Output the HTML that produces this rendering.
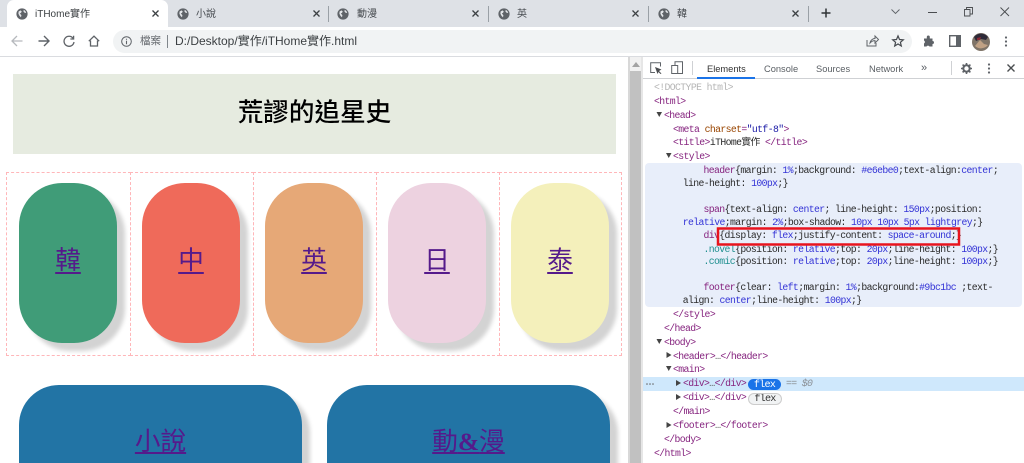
<!DOCTYPE html>
<html lang="zh-Hant"><head><meta charset="utf-8"><title>iTHome實作</title>
<style>
html,body{margin:0;padding:0;width:1024px;height:463px;overflow:hidden;background:#fff}
body{position:relative;font-family:"Liberation Sans","Noto Sans CJK TC",sans-serif}
#w{position:absolute;left:0;top:0;width:1024px;height:463px;overflow:hidden;filter:blur(.35px)}
.a{position:absolute;white-space:pre}
.tt{font-size:10px;color:#45494e;top:8px;line-height:14px}
.card{position:absolute;top:183px;width:98px;height:160px;border-radius:43px;box-shadow:8px 8px 4px lightgrey;text-align:center;line-height:156px;font-size:25.6px;color:#551a8b;text-decoration:underline;text-decoration-thickness:2px;text-underline-offset:2.5px}
.big{position:absolute;top:385px;width:283px;height:78px;border-radius:40px 40px 0 0;background:#2274a5;box-shadow:8px 8px 4px lightgrey;text-align:center;line-height:113px;font-size:25.6px;color:#551a8b;text-decoration:underline;text-decoration-thickness:2px;text-underline-offset:2px;font-family:"Liberation Serif","Noto Sans CJK TC",serif;overflow:hidden}
.cell{position:absolute;top:172px;height:184px;border:1px dashed #ffb6b9;box-sizing:border-box}
.m{position:absolute;white-space:pre;font-family:"Liberation Mono","Noto Sans CJK TC",monospace;font-size:9.8px;letter-spacing:-.62px;line-height:14px;color:#2a2a2a}
.t{color:#86247f}.n{color:#994500}.v{color:#1a1aa6}.b{color:#3333d6}.s{color:#86247f}.c{color:#1f8f8f}
.dt{position:absolute;font-size:9.3px;color:#5a5f64;top:63px;line-height:13px;white-space:pre}
svg{position:absolute;overflow:visible}
</style></head><body><div id="w">
<div class="a" style="left:0;top:0;width:1024px;height:27px;background:#dee1e6"></div>
<div class="a" style="left:7px;top:0;width:161px;height:27px;background:#fff;border-radius:7px 7px 0 0"></div>
<div class="a" style="left:0;top:27px;width:1024px;height:29px;background:#fff"></div>
<div class="a" style="left:0;top:56px;width:1024px;height:1px;background:#dadce0"></div>

<svg width="0" height="0" style="left:0;top:0"><defs>
<g id="globe"><circle cx="6" cy="6" r="5.6" fill="#5f6368"/><path d="M2.600 3.500 4.600 2.400 5.800 3.600 4.800 5 3.800 5.400 5.400 7.200 5 9.400 3.600 8 2.400 5.800ZM7.800 1.800 9.600 3.400 10.200 5 8.600 4.800 7.400 3.400Z" fill="#e4e6e9"/></g>
<path id="x" d="M.5.5 6.500 6.500M6.500.5 .5 6.500" stroke="#3c4043" stroke-width="1.300" fill="none"/>
</defs></svg>

<svg style="left:16px;top:8px" width="12" height="12"><use href="#globe"/></svg>
<div class="a tt" style="left:35px;color:#3c4043">iTHome實作</div>
<svg style="left:152px;top:10px" width="7" height="7"><use href="#x"/></svg>
<svg style="left:177px;top:8px" width="12" height="12"><use href="#globe"/></svg>
<div class="a tt" style="left:196px">小說</div>
<svg style="left:313px;top:10px" width="7" height="7"><use href="#x"/></svg>
<div class="a" style="left:328px;top:6px;width:1px;height:16px;background:#9aa0a6"></div>
<svg style="left:337px;top:8px" width="12" height="12"><use href="#globe"/></svg>
<div class="a tt" style="left:357px">動漫</div>
<svg style="left:472px;top:10px" width="7" height="7"><use href="#x"/></svg>
<div class="a" style="left:488px;top:6px;width:1px;height:16px;background:#9aa0a6"></div>
<svg style="left:498px;top:8px" width="12" height="12"><use href="#globe"/></svg>
<div class="a tt" style="left:517px">英</div>
<svg style="left:632px;top:10px" width="7" height="7"><use href="#x"/></svg>
<div class="a" style="left:648px;top:6px;width:1px;height:16px;background:#9aa0a6"></div>
<svg style="left:658px;top:8px" width="12" height="12"><use href="#globe"/></svg>
<div class="a tt" style="left:677px">韓</div>
<svg style="left:792px;top:10px" width="7" height="7"><use href="#x"/></svg>
<div class="a" style="left:808px;top:6px;width:1px;height:16px;background:#9aa0a6"></div>
<svg style="left:821px;top:8px" width="10" height="10"><path d="M5 .5V9.500M.5 5H9.500" stroke="#2f3235" stroke-width="1.500"/></svg>

<svg style="left:891px;top:9px" width="10" height="6"><path d="M.5.5 4.500 4.500 8.500.5" stroke="#5f6368" fill="none" stroke-width=".9"/></svg>
<div class="a" style="left:928px;top:12px;width:9px;height:1px;background:#4a4d50"></div>
<svg style="left:964px;top:7px" width="9" height="10"><path d="M.5 2.500H6V9H.5ZM2.500 2.500V.5H8.500V7H6" fill="none" stroke="#4a4d50" stroke-width=".9"/></svg>
<svg style="left:1000px;top:7px" width="10" height="10"><path d="M.5.5 9 9M9 .5 .5 9" stroke="#4a4d50" stroke-width=".9"/></svg>

<svg style="left:11px;top:35px" width="12" height="12"><path d="M11.500 6H1M6 1 1 6 6 11" fill="none" stroke="#b6b9bd" stroke-width="1.300"/></svg>
<svg style="left:38px;top:35px" width="12" height="12"><path d="M.5 6H11M6 1 11 6 6 11" fill="none" stroke="#5f6368" stroke-width="1.400"/></svg>
<svg style="left:63px;top:35px" width="12" height="12"><path d="M10 3.200A5 5 0 1 0 11 7M10.600.8V4H7.400" fill="none" stroke="#5f6368" stroke-width="1.300"/></svg>
<svg style="left:88px;top:35px" width="12" height="12"><path d="M.8 6.200 6 1.200 11.200 6.200M2.500 5.500V11H9.500V5.500" fill="none" stroke="#5f6368" stroke-width="1.300"/></svg>
<div class="a" style="left:113px;top:30px;width:799px;height:23px;border-radius:12px;background:#f1f3f4"></div>
<svg style="left:121px;top:36px" width="11" height="11"><circle cx="5.500" cy="5.500" r="4.800" fill="none" stroke="#5f6368" stroke-width="1"/><path d="M5.500 4.800V8.200M5.500 2.700V3.800" stroke="#5f6368" stroke-width="1.100"/></svg>
<div class="a" style="left:140px;top:34px;font-size:10.500px;line-height:15px;color:#5f6368">檔案</div>
<div class="a" style="left:167px;top:35px;width:1px;height:13px;background:#80868b"></div>
<div class="a" style="left:175px;top:34px;font-size:12px;line-height:15px;color:#3c4043">D:/Desktop/實作/iTHome實作.html</div>
<svg style="left:866px;top:35px" width="13" height="12"><path d="M1 5V11H10V8M4 8C4.500 5 7 3.500 9 3.500V1L12.500 4.500 9 8V5.600C7 5.600 5.500 6.300 4 8Z" fill="none" stroke="#5f6368" stroke-width="1"/></svg>
<svg style="left:892px;top:35px" width="12" height="12"><path d="M6 .9 7.500 4.500 11.300 4.800 8.400 7.300 9.300 11 6 9 2.700 11 3.600 7.300 .7 4.800 4.500 4.500Z" fill="none" stroke="#45494e" stroke-width="1.200"/></svg>
<svg style="left:923px;top:35px" width="12" height="12"><path d="M1 3.500H3.800V2A1.500 1.500 0 0 1 6.800 2V3.500H9.500V6A1.500 1.500 0 0 1 9.500 9V11.500H6.500A1.700 1.700 0 0 0 3.500 11.500H1V8.500A1.700 1.700 0 0 0 1 5.500Z" fill="#5f6368"/></svg>
<svg style="left:949px;top:35px" width="12" height="12"><rect x=".7" y=".7" width="10.600" height="10.600" fill="none" stroke="#5f6368" stroke-width="1.400"/><rect x="7" y="1" width="4" height="10" fill="#5f6368"/></svg>
<svg style="left:972px;top:33px" width="18" height="18"><circle cx="9" cy="9" r="9" fill="#7f7468"/><path d="M2 4A9 9 0 0 1 16 4L14 7 9 6 4 8Z" fill="#2e2a38"/><path d="M3 13 8 7 12 11 16 12A9 9 0 0 1 3 13Z" fill="#c0a184"/><path d="M5 5 9 4 8 7 5 7Z" fill="#8d2a36"/></svg>
<svg style="left:1004px;top:36px" width="4" height="11"><circle cx="2" cy="1.500" r="1.100" fill="#5f6368"/><circle cx="2" cy="5.500" r="1.100" fill="#5f6368"/><circle cx="2" cy="9.500" r="1.100" fill="#5f6368"/></svg>

<!-- page -->
<div class="a" style="left:13px;top:74px;width:603px;height:80px;background:#e6ebe0;text-align:center;font-size:25.600px;font-weight:500;line-height:79px;color:#000">荒謬的追星史</div>
<div class="cell" style="left:6px;width:125px"></div>
<div class="cell" style="left:130px;width:124px"></div>
<div class="cell" style="left:253px;width:124px"></div>
<div class="cell" style="left:376px;width:124px"></div>
<div class="cell" style="left:499px;width:123px"></div>
<div class="card" style="left:19px;background:#409c78">韓</div>
<div class="card" style="left:142px;background:#ef6a5a">中</div>
<div class="card" style="left:265px;background:#e6a877">英</div>
<div class="card" style="left:388px;background:#edd2e0">日</div>
<div class="card" style="left:511px;background:#f4f0bb">泰</div>
<div class="big" style="left:19px">小說</div>
<div class="big" style="left:327px">動<b>&amp;</b>漫</div>

<!-- devtools -->
<div class="a" style="left:628px;top:57px;width:396px;height:406px;background:#fff"></div>
<div class="a" style="left:628px;top:57px;width:2px;height:406px;background:#d8d8d8"></div>
<div class="a" style="left:630px;top:57px;width:11px;height:406px;background:#f1f1f1"></div>
<div class="a" style="left:630px;top:71px;width:11px;height:392px;background:#c1c1c1"></div>
<svg style="left:632px;top:62px" width="8" height="5"><path d="M4 0 8 5H0Z" fill="#a3a3a3"/></svg>
<div class="a" style="left:641px;top:57px;width:2px;height:406px;background:#e6e6e6"></div>
<div class="a" style="left:643px;top:78px;width:381px;height:1px;background:#cfd1d4"></div>
<svg style="left:650px;top:62px" width="12" height="12"><path d="M5 10.500H.7V.7H10.500V4.500" fill="none" stroke="#5f6368" stroke-width="1"/><path d="M5 5 11.500 7.500 9 9 11.500 11.500 10.500 12 8.500 10 7.500 12Z" fill="#4a4d50"/></svg>
<svg style="left:671px;top:61px" width="13" height="14"><path d="M4 4V.7H11.500V12.500H4" fill="none" stroke="#5f6368" stroke-width="1"/><rect x=".7" y="4.500" width="6" height="8" fill="none" stroke="#5f6368" stroke-width="1"/></svg>
<div class="a" style="left:692px;top:61px;width:1px;height:14px;background:#cfd1d4"></div>
<div class="dt" style="left:707px;color:#333">Elements</div>
<div class="dt" style="left:764px">Console</div>
<div class="dt" style="left:816px">Sources</div>
<div class="dt" style="left:869px">Network</div>
<div class="dt" style="left:921px;top:62px;font-size:11px">»</div>
<div class="a" style="left:697px;top:77px;width:58px;height:2px;background:#1a73e8"></div>
<div class="a" style="left:951px;top:61px;width:1px;height:14px;background:#cfd1d4"></div>
<svg style="left:961px;top:63px" width="11" height="11"><circle cx="5.500" cy="5.500" r="3.200" fill="none" stroke="#5f6368" stroke-width="2"/><path d="M5.500 0V11M0 5.500H11M1.600 1.600 9.400 9.400M9.400 1.600 1.600 9.400" stroke="#5f6368" stroke-width="1.600" stroke-dasharray="2 7 2"/></svg>
<svg style="left:987px;top:63px" width="4" height="11"><circle cx="2" cy="1.500" r="1.100" fill="#5f6368"/><circle cx="2" cy="5.500" r="1.100" fill="#5f6368"/><circle cx="2" cy="9.500" r="1.100" fill="#5f6368"/></svg>
<svg style="left:1007px;top:64px" width="8" height="8"><path d="M.5.5 7.500 7.500M7.500.5 .5 7.500" stroke="#4a4d50" stroke-width="1.400"/></svg>

<div class="a" style="left:645px;top:163px;width:377px;height:144px;background:#e8eefa;border-radius:4px"></div>
<div class="a" style="left:643px;top:377px;width:381px;height:14px;background:#cfe8fc"></div>

<div class="m" style="left:654px;top:81px;color:#b5b5b5">&lt;!DOCTYPE html&gt;</div>
<div class="m t" style="left:654px;top:95px">&lt;html&gt;</div>
<div class="m t" style="left:664px;top:109px">&lt;head&gt;</div>
<div class="m" style="left:673px;top:123px"><span class="t">&lt;meta </span><span class="n">charset</span><span class="t">=</span><span class="v">"utf-8"</span><span class="t">&gt;</span></div>
<div class="m" style="left:673px;top:136px"><span class="t">&lt;title&gt;</span>iTHome實作 <span class="t">&lt;/title&gt;</span></div>
<div class="m t" style="left:673px;top:150px">&lt;style&gt;</div>
<div class="m" style="left:703.500px;top:164px"><span class="s">header</span>{margin: <span class="b">1%</span>;background: <span class="b">#e6ebe0</span>;text-align:<span class="b">center</span>;</div>
<div class="m" style="left:682.700px;top:177px">line-height: <span class="b">100px</span>;}</div>
<div class="m" style="left:703.500px;top:203px"><span class="s">span</span>{text-align: <span class="b">center</span>; line-height: <span class="b">150px</span>;position:</div>
<div class="m" style="left:682.700px;top:216px"><span class="b">relative</span>;margin: <span class="b">2%</span>;box-shadow: <span class="b">10px 10px 5px lightgrey</span>;}</div>
<div class="m" style="left:703.500px;top:229px"><span class="s">div</span>{display: <span class="b">flex</span>;justify-content: <span class="b">space-around</span>;}</div>
<div class="m" style="left:703.500px;top:243px"><span class="c">.novel</span>{position: <span class="b">relative</span>;top: <span class="b">20px</span>;line-height: <span class="b">100px</span>;}</div>
<div class="m" style="left:703.500px;top:255px"><span class="c">.comic</span>{position: <span class="b">relative</span>;top: <span class="b">20px</span>;line-height: <span class="b">100px</span>;}</div>
<div class="m" style="left:703.500px;top:281px"><span class="s">footer</span>{clear: <span class="b">left</span>;margin: <span class="b">1%</span>;background:<span class="b">#9bc1bc</span> ;text-</div>
<div class="m" style="left:682.700px;top:294px">align: <span class="b">center</span>;line-height: <span class="b">100px</span>;}</div>
<div class="m t" style="left:673px;top:308px">&lt;/style&gt;</div>
<div class="m t" style="left:664px;top:322px">&lt;/head&gt;</div>
<div class="m t" style="left:664px;top:336px">&lt;body&gt;</div>
<div class="m t" style="left:673px;top:350px">&lt;header&gt;<span style="color:#555">…</span>&lt;/header&gt;</div>
<div class="m t" style="left:673px;top:363px">&lt;main&gt;</div>
<div class="m t" style="left:683px;top:377px">&lt;div&gt;<span style="color:#555">…</span>&lt;/div&gt;</div>
<div class="m t" style="left:683px;top:391px">&lt;div&gt;<span style="color:#555">…</span>&lt;/div&gt;</div>
<div class="m t" style="left:673px;top:405px">&lt;/main&gt;</div>
<div class="m t" style="left:673px;top:419px">&lt;footer&gt;<span style="color:#555">…</span>&lt;/footer&gt;</div>
<div class="m t" style="left:664px;top:433px">&lt;/body&gt;</div>
<div class="m t" style="left:654px;top:447px">&lt;/html&gt;</div>

<svg style="left:646px;top:383px" width="9" height="2"><circle cx="1" cy="1" r=".8" fill="#666"/><circle cx="4" cy="1" r=".8" fill="#666"/><circle cx="7" cy="1" r=".8" fill="#666"/></svg>
<div class="a" style="left:748px;top:379px;width:33px;height:11px;border-radius:6px;background:#1a73e8;color:#fff;font:10.200px/13px 'Liberation Mono',monospace;letter-spacing:-.8px;text-align:center;overflow:hidden">flex</div>
<div class="a" style="left:748px;top:393px;width:32px;height:10px;border-radius:6px;background:#f1f3f4;border:.5px solid #ccc;color:#333;font:10.200px/12px 'Liberation Mono',monospace;letter-spacing:-.8px;text-align:center;overflow:hidden">flex</div>
<div class="m" style="left:786px;top:377px;color:#8a8f95">== <i>$0</i></div>

<svg style="left:0;top:0" width="1024" height="463">
<g fill="#444">
<path d="M656.500 112 662 112 659.250 117Z"/>
<path d="M666 153 671.500 153 668.750 158Z"/>
<path d="M656.500 339 662 339 659.250 344Z"/>
<path d="M666.500 352 671.500 355 666.500 358Z"/>
<path d="M666 366 671.500 366 668.750 371Z"/>
<path d="M676 380 681 383 676 386Z"/>
<path d="M676 394 681 397 676 400Z"/>
<path d="M666.500 422 671.500 425 666.500 428Z"/>
</g>
<rect x="718" y="228.500" width="241" height="16" fill="none" stroke="#e8141e" stroke-width="2.500"/>
</svg>
</div></body></html>
